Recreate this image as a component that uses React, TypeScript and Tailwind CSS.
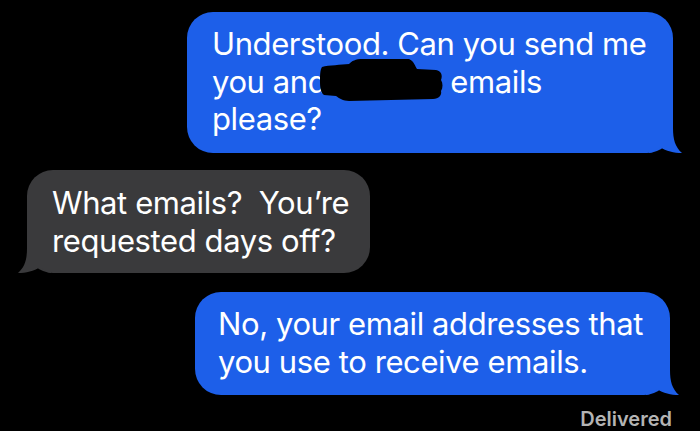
import React from "react";

const BLUE = "#1d5fe9";
const GRAY = "#3a3a3c";

function RightTail({ color }: { color: string }) {
  return (
    <svg
      className="absolute right-[-9px] bottom-0"
      width="33"
      height="28"
      viewBox="0 0 33 28"
    >
      <path
        d="M0,0 H24 V3 C24,14 26,22 33,28 C25,28 17,26 11,22 C7,25 3,28 0,28 Z"
        fill={color}
      />
    </svg>
  );
}

function LeftTail({ color }: { color: string }) {
  return (
    <svg
      className="absolute left-[-9px] bottom-0"
      width="33"
      height="28"
      viewBox="0 0 33 28"
    >
      <path
        d="M33,0 H9 V3 C9,14 7,22 0,28 C8,28 16,26 22,22 C26,25 30,28 33,28 Z"
        fill={color}
      />
    </svg>
  );
}

export default function App() {
  return (
    <div
      className="w-[700px] h-[431px] bg-black flex flex-col overflow-hidden text-white"
      style={{ fontFamily: "Inter, 'Noto Sans', sans-serif" }}
    >
      <div className="flex justify-end pr-[27px] pt-[12px]">
        <div className="relative w-[486px] h-[141px] rounded-[26px] bg-[#1d5fe9] pl-[25px] pt-[13px] text-[31px] leading-[37.5px] tracking-[-0.4px]">
          <div>Understood. Can you send me</div>
          <div>
            you and<span className="inline-block w-[124px]"></span>emails
          </div>
          <div>please?</div>
          <svg
            className="absolute left-[132px] top-[46px]"
            width="126"
            height="44"
            viewBox="0 0 126 44"
          >
            <path
              d="M3,9 C10,7 22,7 30,6 C33,3 36,1 44,1 L90,1 C95,3 96,8 98,11 L117,12 C122,13 124,17 122,22 C124,25 124,30 122,33 C123,37 120,41 114,41 L30,43 C24,43 20,40 17,38 L5,37 C2,35 1,30 1,24 C1,18 1,12 3,9 Z"
              fill="#000"
            />
          </svg>
          <RightTail color={BLUE} />
        </div>
      </div>

      <div className="flex justify-start pl-[27px] mt-[17px]">
        <div className="relative w-[343px] h-[103px] rounded-[26px] bg-[#3a3a3c] pl-[25px] pt-[14px] text-[31px] leading-[37.5px] tracking-[-0.4px]">
          <div>What emails?&nbsp; You’re</div>
          <div>requested days off?</div>
          <LeftTail color={GRAY} />
        </div>
      </div>

      <div className="flex justify-end pr-[30px] mt-[19px]">
        <div className="relative w-[475px] h-[103px] rounded-[26px] bg-[#1d5fe9] pl-[23px] pt-[13px] text-[31px] leading-[37.5px] tracking-[-0.4px]">
          <div>No, your email addresses that</div>
          <div>you use to receive emails.</div>
          <RightTail color={BLUE} />
        </div>
      </div>

      <div className="flex justify-end pr-[28px] mt-[11px]">
        <span className="text-[20px] leading-[26px] font-semibold text-[#b4b4b4]">
          Delivered
        </span>
      </div>
    </div>
  );
}
